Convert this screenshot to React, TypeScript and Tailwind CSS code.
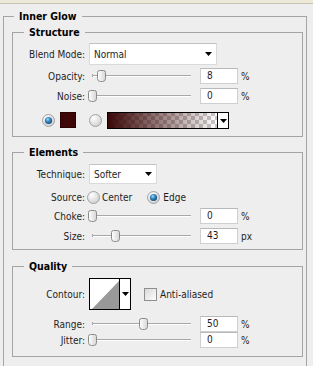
import { useId } from 'react'

type SliderProps = { label: string; value: string; unit: string; pos: number; h?: string }

function Radio({ checked }: { checked?: boolean }) {
  const id = useId()
  return (
    <svg width="13" height="13" viewBox="0 0 13 13" className="shrink-0">
      <defs>
        <radialGradient id={`${id}r`} cx="35%" cy="30%" r="75%">
          <stop offset="0" stopColor="#ffffff" />
          <stop offset="1" stopColor="#cfcfcf" />
        </radialGradient>
        <radialGradient id={`${id}d`} cx="40%" cy="35%" r="70%">
          <stop offset="0" stopColor="#9fdcf8" />
          <stop offset="0.5" stopColor="#2f7fb8" />
          <stop offset="1" stopColor="#154a78" />
        </radialGradient>
      </defs>
      <circle cx="6.5" cy="6.5" r="6" fill={`url(#${id}r)`} stroke="#a2a2a2" />
      {checked && <circle cx="6.5" cy="6.5" r="3.6" fill={`url(#${id}d)`} />}
    </svg>
  )
}

function Arrow() {
  return (
    <svg width="7" height="4" viewBox="0 0 7 4" className="shrink-0">
      <polygon points="0,0 7,0 3.5,4" fill="#000" />
    </svg>
  )
}

function Thumb() {
  const id = useId()
  return (
    <svg width="9" height="12" viewBox="0 0 9 12">
      <defs>
        <linearGradient id={id} x1="0" y1="0" x2="1" y2="0">
          <stop offset="0" stopColor="#ffffff" />
          <stop offset="1" stopColor="#d6d6d6" />
        </linearGradient>
      </defs>
      <path d="M2.5 0.5 h4 a2 2 0 0 1 2 2 v6 a3 3 0 0 1 -3 3 h-2 a3 3 0 0 1 -3 -3 v-6 a2 2 0 0 1 2 -2 z" fill={`url(#${id})`} stroke="#8a8a8a" />
    </svg>
  )
}

function Label({ children }: { children: string }) {
  return <span className="w-[72px] shrink-0 text-right">{children}</span>
}

function Slider({ label, value, unit, pos, h = 'h-[20px]' }: SliderProps) {
  return (
    <div className={`flex items-center ${h}`}>
      <Label>{label}</Label>
      <div className="relative ml-[3px] h-full w-[108px] shrink-0">
        <div className="absolute left-[4px] top-1/2 h-[2px] w-[99px] -translate-y-px border-t border-b border-t-[#a8a8a8] border-b-white" />
        <div className="absolute left-[4px] top-1/2 h-[3px] w-px -translate-y-[2px] bg-[#a8a8a8]" />
        <div className="absolute top-1/2 -translate-y-[6px]" style={{ left: pos }}>
          <Thumb />
        </div>
      </div>
      <div className="ml-[4px] h-[16px] w-[38px] shrink-0 border border-[#cfcfcf] border-t-[#b9b9b9] bg-white pl-[6px] leading-[14px]">
        {value}
      </div>
      <span className="ml-[3px]">{unit}</span>
    </div>
  )
}

function Legend({ children, outer }: { children: string; outer?: boolean }) {
  return (
    <legend className={`${outer ? 'ml-[2px]' : 'ml-[11px]'} px-[5px] text-[10.5px] font-bold leading-[13px] text-black`}>
      {children}
    </legend>
  )
}

function GradientSwatch() {
  const id = useId()
  return (
    <svg width="122" height="17" viewBox="0 0 122 17" className="shrink-0">
      <defs>
        <pattern id={`${id}c`} width="8" height="8" patternUnits="userSpaceOnUse">
          <rect width="8" height="8" fill="#ffffff" />
          <rect width="4" height="4" fill="#c9c9c9" />
          <rect x="4" y="4" width="4" height="4" fill="#c9c9c9" />
        </pattern>
        <linearGradient id={`${id}g`} x1="0" y1="0" x2="1" y2="0">
          <stop offset="0" stopColor="#3b0707" stopOpacity="1" />
          <stop offset="1" stopColor="#3b0707" stopOpacity="0" />
        </linearGradient>
      </defs>
      <rect x="1" y="1" width="109" height="15" fill={`url(#${id}c)`} />
      <rect x="1" y="1" width="109" height="15" fill={`url(#${id}g)`} />
      <rect x="110" y="1" width="11" height="15" fill="#ffffff" />
      <line x1="110.5" y1="1" x2="110.5" y2="16" stroke="#000" />
      <rect x="0.5" y="0.5" width="121" height="16" fill="none" stroke="#000" />
      <polygon points="113,7 120,7 116.5,11" fill="#000" />
    </svg>
  )
}

function ContourBox() {
  return (
    <svg width="42" height="32" viewBox="0 0 42 32" className="shrink-0">
      <rect x="0.5" y="0.5" width="41" height="31" fill="#ffffff" stroke="#000" />
      <polygon points="3,31 30,3 30,31" fill="#999999" />
      <line x1="30.5" y1="0" x2="30.5" y2="32" stroke="#000" />
      <polygon points="33,14 40,14 36.5,18" fill="#000" />
    </svg>
  )
}

function Checkbox() {
  const id = useId()
  return (
    <svg width="13" height="13" viewBox="0 0 13 13" className="shrink-0">
      <defs>
        <linearGradient id={id} x1="0" y1="0" x2="1" y2="1">
          <stop offset="0" stopColor="#d8d8d8" />
          <stop offset="1" stopColor="#ffffff" />
        </linearGradient>
      </defs>
      <rect x="0.5" y="0.5" width="12" height="12" fill={`url(#${id})`} stroke="#8f8f8f" />
    </svg>
  )
}

export default function App() {
  return (
    <div className="h-[366px] w-[313px] overflow-hidden bg-[#eeeeee] font-['DejaVu_Sans_Condensed','DejaVu_Sans',sans-serif] text-[10px] text-[#1e1e1e]">
      <div className="h-[4px] border-b border-[#c7c4b4] bg-[#ece9d8]" />

      <fieldset className="mt-[6px] ml-[3px] w-[304px] border border-[#a4a4a4] pt-[3px] pr-[3px] pb-[30px] pl-[8px]">
        <Legend outer>Inner Glow</Legend>

        {/* Structure */}
        <fieldset className="border border-[#a4a4a4] pt-[4px] pb-[6px]">
          <Legend>Structure</Legend>
          <div className="flex h-[22px] items-center">
            <Label>Blend Mode:</Label>
            <div className="ml-[4px] flex h-[22px] w-[128px] items-center justify-between border border-[#dadada] border-t-[#c2c2c2] bg-white pr-[4px] pl-[4px]">
              <span>Normal</span>
              <Arrow />
            </div>
          </div>
          <div className="mt-[1px]">
            <Slider label="Opacity:" value="8" unit="%" pos={9} />
            <Slider label="Noise:" value="0" unit="%" pos={0} />
          </div>
          <div className="mt-[4px] flex h-[20px] items-center pl-[29px]">
            <Radio checked />
            <div className="ml-[5px] h-[16px] w-[16px] shrink-0 border border-[#2a0000] bg-[#3f0707]" />
            <div className="ml-[13px] flex">
              <Radio />
            </div>
            <div className="ml-[5px] flex">
              <GradientSwatch />
            </div>
          </div>
        </fieldset>

        {/* Elements */}
        <fieldset className="mt-[9px] border border-[#a4a4a4] pt-[5px] pb-[3px]">
          <Legend>Elements</Legend>
          <div className="flex h-[20px] items-center">
            <Label>Technique:</Label>
            <div className="ml-[4px] flex h-[20px] w-[68px] items-center justify-between border border-[#dadada] border-t-[#c2c2c2] bg-white pr-[4px] pl-[4px]">
              <span>Softer</span>
              <Arrow />
            </div>
          </div>
          <div className="mt-[4px] flex h-[18px] items-center">
            <Label>Source:</Label>
            <div className="ml-[2px] flex items-center">
              <Radio />
              <span className="ml-[2px]">Center</span>
              <div className="ml-[15px] flex">
                <Radio checked />
              </div>
              <span className="ml-[3px]">Edge</span>
            </div>
          </div>
          <Slider label="Choke:" value="0" unit="%" pos={0} />
          <Slider label="Size:" value="43" unit="px" pos={23} />
        </fieldset>

        {/* Quality */}
        <fieldset className="mt-[10px] border border-[#a4a4a4] pt-[5px] pb-[8px]">
          <Legend>Quality</Legend>
          <div className="flex h-[32px] items-center">
            <Label>Contour:</Label>
            <div className="ml-[4px] flex">
              <ContourBox />
            </div>
            <div className="ml-[13px] flex">
              <Checkbox />
            </div>
            <span className="ml-[3px]">Anti-aliased</span>
          </div>
          <div className="mt-[6px]">
            <Slider label="Range:" value="50" unit="%" pos={51} h="h-[16px]" />
            <Slider label="Jitter:" value="0" unit="%" pos={0} h="h-[16px]" />
          </div>
        </fieldset>
      </fieldset>
    </div>
  )
}
